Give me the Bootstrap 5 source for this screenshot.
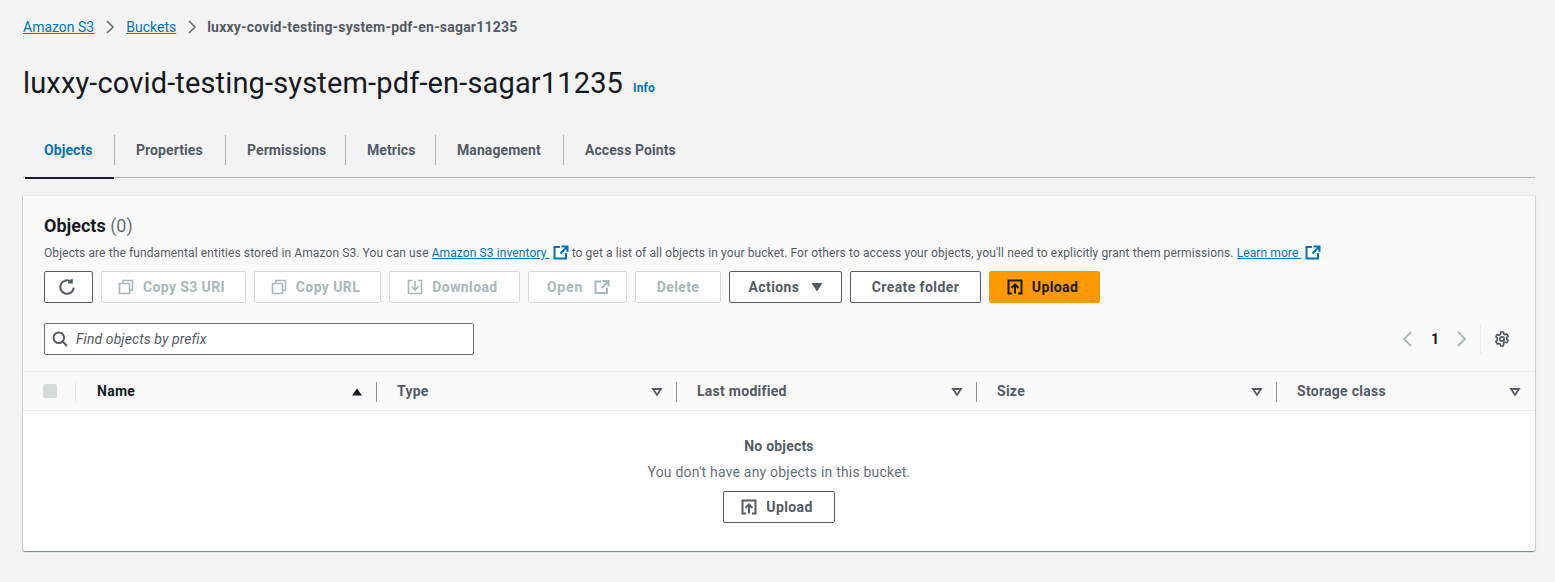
<!DOCTYPE html>
<html lang="en">
<head>
<meta charset="utf-8">
<title>luxxy-covid-testing-system-pdf-en-sagar11235</title>
<link href="https://cdn.jsdelivr.net/npm/bootstrap@5.3.0/dist/css/bootstrap.min.css" rel="stylesheet">
<style>
html,body{height:100%}
body{background:#f3f3f3;font-family:Roboto,"Liberation Sans",sans-serif;color:#16191f;font-size:14px;overflow:hidden}
.s3-page{padding:17px 20px 0 23px}
a.s3-link{color:#0073bb;text-decoration:underline}
.s3-crumbs{height:20px;font-size:14px;line-height:20px;gap:10px}
.s3-crumbs .s3-current{color:#545b64;font-weight:700;letter-spacing:.21px;margin-left:-1px}
.s3-crumbs svg{width:12px;height:16px;color:#687078}
.s3-title{margin:29px 0 0;height:34px;gap:10px}
.s3-title h1{font-size:29px;line-height:34px;font-weight:400;margin:0;letter-spacing:.15px}
.s3-title a{font-size:12px;font-weight:700;color:#0073bb;text-decoration:none;position:relative;top:5px;letter-spacing:.1px}
.s3-tabs{margin-top:35px;height:43px;border-bottom:1px solid #aeb3b3;padding-left:2px}
.s3-tab{height:43px;font-weight:700;color:#545b64;position:relative;padding-top:5px;padding-left:22px;line-height:20px;flex:none;letter-spacing:.08px}
.s3-tab+.s3-tab::before{content:"";position:absolute;left:0;top:0;height:30px;width:1px;background:#aeb3b3}
.s3-tab.s3-active{color:#0073bb;padding-left:19px}
.s3-tab.s3-active::after{content:"";position:absolute;left:0;right:0;bottom:-1px;height:2px;background:#16191f}
.s3-panel{margin-top:17px;height:356px;width:1512px;border-radius:0 0 2px 2px;background:#fff;box-shadow:0 1px 1px 0 rgba(0,28,36,.3),1px 1px 1px 0 rgba(0,28,36,.15),-1px 1px 1px 0 rgba(0,28,36,.15);border-top:1px solid #eaeded}
.s3-head{background:#fafafa;height:176px;padding:19px 21px 0;border-bottom:1px solid #eaeded}
.s3-head h2{font-size:18px;line-height:22px;font-weight:700;margin:0}
.s3-head h2 span{font-weight:400;color:#687078}
.s3-desc{font-size:12px;line-height:16px;color:#545b64;margin-top:8px;white-space:nowrap;letter-spacing:.102px}
.s3-desc svg{width:16px;height:15px;vertical-align:-3px;margin-left:0}
.s3-toolbar{margin-top:10px;gap:8px}
.s3-btn{height:32px;border-radius:2px;border:1px solid #545b64;background:#fff;color:#545b64;font-weight:700;font-size:14px;line-height:1;padding:0;gap:9px;letter-spacing:.4px;--bs-btn-hover-bg:#fff}
.s3-btn svg{width:16px;height:16px;flex:none}
.s3-btn.s3-off,.s3-btn.s3-off:disabled{border-color:#d5dbdb;background:#fff;color:#aab7b8;opacity:1}
.s3-btn.s3-primary{background:#ff9900;border-color:#ff9900;color:#16191f}
.s3-btn .s3-refresh{width:18px;height:18px}
.s3-lean{padding-right:4px}
.s3-open{gap:11px;letter-spacing:.8px;padding-left:2px}
.s3-act{padding-left:3px;gap:10px}
.w49{width:49px}.w145{width:145px}.w127{width:127px}.w131{width:131px}.w99{width:99px}.w86{width:86px}.w113{width:113px}.w111{width:111px}
.s3-filter-row{margin-top:20px}
.s3-search{width:430px;height:32px;border:1px solid #687078;border-radius:2px;background:#fff;padding-left:7px;gap:8px;font-style:italic;color:#545b64;line-height:1;letter-spacing:.08px}
.s3-search svg{width:16px;height:16px;flex:none;color:#545b64}
.s3-pager{margin-right:4px;color:#16191f;font-weight:700}
.s3-pager svg{display:block}
.s3-num{margin:0 18px;width:7px;text-align:center}
.s3-sep{width:1px;height:30px;background:#eaeded;margin:0 13px 0 12px}
.s3-cols{height:39px;background:#fafafa;border-bottom:1px solid #eaeded;font-weight:700;color:#545b64;letter-spacing:.27px}
.s3-check{width:14px;height:14px;background:#d5dbdb;border-radius:2px;flex:none}
.s3-col{position:relative;width:300px;padding-left:20px;height:100%;flex:none}
.s3-col svg{position:absolute;right:14px;top:15px;width:12px;height:10px}
.s3-col::after{content:"";position:absolute;right:0;top:10px;height:20px;width:1px;background:#879596}
.s3-col:last-child{flex:1 1 0;width:auto}
.s3-col:last-child::after{display:none}
.s3-col-check{width:53px}
.s3-col-check::after{background:#eaeded}
.s3-col-name{width:301px;color:#16191f;padding-left:21px}
.s3-empty{height:140px;padding-top:25px;color:#687078;text-align:center;line-height:20px;letter-spacing:.2px}
.s3-empty strong{color:#545b64;display:block}
.s3-empty p{margin:6px 0 9px}
.s3-empty .s3-btn{width:112px;margin:0 auto}
</style>
</head>
<body>
<div class="s3-page">
  <nav class="s3-crumbs d-flex align-items-center">
    <a class="s3-link" href="#">Amazon S3</a>
    <svg viewBox="0 0 12 16" fill="none" stroke="currentColor" stroke-width="1.600"><path d="M3 2l6 6-6 6"/></svg>
    <a class="s3-link" href="#">Buckets</a>
    <svg viewBox="0 0 12 16" fill="none" stroke="currentColor" stroke-width="1.600"><path d="M3 2l6 6-6 6"/></svg>
    <span class="s3-current">luxxy-covid-testing-system-pdf-en-sagar11235</span>
  </nav>
  <div class="s3-title d-flex align-items-center">
    <h1>luxxy-covid-testing-system-pdf-en-sagar11235</h1>
    <a href="#">Info</a>
  </div>
  <div class="s3-tabs d-flex">
    <div class="s3-tab s3-active" style="width:89px">Objects</div>
    <div class="s3-tab" style="width:111px">Properties</div>
    <div class="s3-tab" style="width:120px">Permissions</div>
    <div class="s3-tab" style="width:90px">Metrics</div>
    <div class="s3-tab" style="width:128px">Management</div>
    <div class="s3-tab" style="width:130px">Access Points</div>
  </div>
  <section class="s3-panel d-flex flex-column">
    <div class="s3-head">
      <h2>Objects <span>(0)</span></h2>
      <div class="s3-desc">Objects are the fundamental entities stored in Amazon S3. You can use <a class="s3-link" href="#">Amazon S3 inventory&nbsp;</a> <svg viewBox="0 0 16 15" fill="none" stroke="#0073bb" stroke-width="2"><path d="M7 2H1.500v11.500H13V8M8.500 1.500h6V7M14 2L7.500 8.500"/></svg> to get a list of all objects in your bucket. For others to access your objects, you'll need to explicitly grant them permissions. <a class="s3-link" href="#">Learn more&nbsp;</a> <svg viewBox="0 0 16 15" fill="none" stroke="#0073bb" stroke-width="2"><path d="M7 2H1.500v11.500H13V8M8.500 1.500h6V7M14 2L7.500 8.500"/></svg></div>
      <div class="s3-toolbar d-flex">
        <button class="btn s3-btn s3-lean w49 d-flex align-items-center justify-content-center" aria-label="Refresh"><svg class="s3-refresh" viewBox="0 0 16 16" fill="none" stroke="currentColor" stroke-width="1.800"><path d="M14 8.500A6 6 0 1 1 11.800 3.400M12.200 .8V4H9"/></svg></button>
        <button class="btn s3-btn s3-off s3-lean w145 d-flex align-items-center justify-content-center" disabled><svg viewBox="0 0 16 16" fill="none" stroke="currentColor" stroke-width="1.600"><path d="M5 4V1.500h9.500V11H12M1.500 4.500H11.500V14.500H1.500z"/></svg>Copy S3 URI</button>
        <button class="btn s3-btn s3-off s3-lean w127 d-flex align-items-center justify-content-center" disabled><svg viewBox="0 0 16 16" fill="none" stroke="currentColor" stroke-width="1.600"><path d="M5 4V1.500h9.500V11H12M1.500 4.500H11.500V14.500H1.500z"/></svg>Copy URL</button>
        <button class="btn s3-btn s3-off s3-lean w131 d-flex align-items-center justify-content-center" disabled><svg viewBox="0 0 16 16" fill="none" stroke="currentColor" stroke-width="1.600"><path d="M5 1.500H1.500v13h13v-13H11M8 2v8.500M4.500 7.500L8 11l3.500-3.500"/></svg>Download</button>
        <button class="btn s3-btn s3-off s3-open w99 d-flex align-items-center justify-content-center" disabled>Open<svg viewBox="0 0 16 15" fill="none" stroke="currentColor" stroke-width="2"><path d="M7 2H1.500v11.500H13V8M8.500 1.500h6V7M14 2L7.500 8.500"/></svg></button>
        <button class="btn s3-btn s3-off w86 d-flex align-items-center justify-content-center" disabled>Delete</button>
        <button class="btn s3-btn s3-act w113 d-flex align-items-center justify-content-center">Actions<svg viewBox="0 0 16 16" fill="currentColor"><path d="M2.500 4h11L8 12.500z"/></svg></button>
        <button class="btn s3-btn w131 d-flex align-items-center justify-content-center">Create folder</button>
        <button class="btn s3-btn s3-primary s3-lean w111 d-flex align-items-center justify-content-center"><svg viewBox="0 0 16 16" fill="none" stroke="currentColor" stroke-width="2"><path d="M5 14.500H1.500v-13h13v13H11M8 14.500V6M4.500 9L8 5.500 11.500 9"/></svg>Upload</button>
      </div>
      <div class="s3-filter-row d-flex justify-content-between align-items-center">
        <div class="s3-search d-flex align-items-center"><svg viewBox="0 0 16 16" fill="none" stroke="currentColor" stroke-width="2"><circle cx="6.800" cy="6.800" r="5.300"/><path d="M10.800 10.800L15 15"/></svg>Find objects by prefix</div>
        <div class="s3-pager d-flex align-items-center">
          <svg width="12" height="18" viewBox="0 0 12 18" fill="none" stroke="#aab7b8" stroke-width="1.800"><path d="M10 2L3 9l7 7"/></svg>
          <span class="s3-num">1</span>
          <svg width="12" height="18" viewBox="0 0 12 18" fill="none" stroke="#aab7b8" stroke-width="1.800"><path d="M2 2l7 7-7 7"/></svg>
          <span class="s3-sep"></span>
          <svg width="16" height="16" viewBox="0 0 16 16" fill="none" stroke="#545b64" stroke-width="1.700" stroke-linejoin="round"><circle cx="8" cy="8" r="2.200"/><path d="M6.700 1h2.600l.4 1.900 1.300.7 1.800-.6 1.300 2.300-1.400 1.300v1.500l1.400 1.300-1.300 2.300-1.800-.6-1.300.7L9.300 15H6.700l-.4-1.900-1.300-.7-1.800.6-1.300-2.300 1.400-1.300V7.200L1.900 5.900l1.300-2.300 1.800.6 1.300-.7z"/></svg>
        </div>
      </div>
    </div>
    <div class="s3-cols d-flex">
      <div class="s3-col s3-col-check d-flex align-items-center"><span class="s3-check"></span></div>
      <div class="s3-col s3-col-name d-flex align-items-center">Name<svg viewBox="0 0 12 10" fill="#16191f"><path d="M1 8.500h10L6 1.500z"/></svg></div>
      <div class="s3-col d-flex align-items-center">Type<svg viewBox="0 0 12 10" fill="none" stroke="#545b64" stroke-width="1.800"><path d="M2 2h8L6 8z"/></svg></div>
      <div class="s3-col d-flex align-items-center">Last modified<svg viewBox="0 0 12 10" fill="none" stroke="#545b64" stroke-width="1.800"><path d="M2 2h8L6 8z"/></svg></div>
      <div class="s3-col d-flex align-items-center">Size<svg viewBox="0 0 12 10" fill="none" stroke="#545b64" stroke-width="1.800"><path d="M2 2h8L6 8z"/></svg></div>
      <div class="s3-col d-flex align-items-center">Storage class<svg viewBox="0 0 12 10" fill="none" stroke="#545b64" stroke-width="1.800"><path d="M2 2h8L6 8z"/></svg></div>
    </div>
    <div class="s3-empty">
      <strong>No objects</strong>
      <p>You don't have any objects in this bucket.</p>
      <button class="btn s3-btn s3-lean d-flex align-items-center justify-content-center"><svg viewBox="0 0 16 16" fill="none" stroke="currentColor" stroke-width="2"><path d="M5 14.500H1.500v-13h13v13H11M8 14.500V6M4.500 9L8 5.500 11.500 9"/></svg>Upload</button>
    </div>
  </section>
</div>
<script src="https://cdn.jsdelivr.net/npm/bootstrap@5.3.0/dist/js/bootstrap.bundle.min.js"></script>
</body>
</html>
